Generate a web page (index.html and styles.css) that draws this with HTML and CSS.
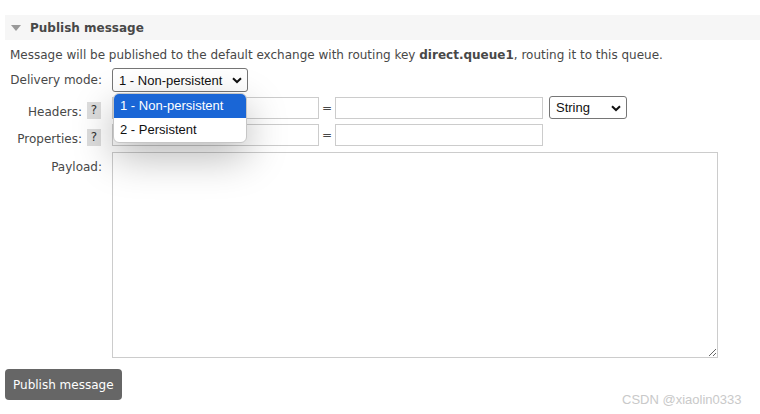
FILE: index.html
```html
<!DOCTYPE html>
<html>
<head>
<meta charset="utf-8">
<link rel="stylesheet" href="styles.css">
</head>
<body>
<div class="section">
  <h2 class="section-head"><span class="tri"></span>Publish message</h2>
  <div class="section-body">
    <p class="intro">Message will be published to the default exchange with routing key <b>direct.queue1</b>, routing it to this queue.</p>
    <div class="form">
      <label class="lbl">Delivery mode:</label>
      <div class="ctl">
        <div class="dm-wrap">
          <div class="sel sel-dm"><span>1 - Non-persistent</span><svg class="chev" width="10" height="7" viewBox="0 0 10 7"><path d="M1 1.2 L5 5 L9 1.2" fill="none" stroke="#111" stroke-width="2"/></svg></div>
          <div class="dropdown">
            <div class="opt active">1 - Non-persistent</div>
            <div class="opt">2 - Persistent</div>
          </div>
        </div>
      </div>

      <label class="lbl lbl-help">Headers: <span class="help">?</span></label>
      <div class="ctl kv">
        <input class="inp key" type="text">
        <span class="eq">=</span>
        <input class="inp val" type="text">
        <div class="sel sel-type"><span>String</span><svg class="chev" width="10" height="7" viewBox="0 0 10 7"><path d="M1 1.2 L5 5 L9 1.2" fill="none" stroke="#111" stroke-width="2"/></svg></div>
      </div>

      <label class="lbl lbl-help">Properties: <span class="help">?</span></label>
      <div class="ctl kv">
        <input class="inp key" type="text">
        <span class="eq">=</span>
        <input class="inp val" type="text">
      </div>

      <label class="lbl lbl-top">Payload:</label>
      <div class="ctl">
        <textarea class="payload"></textarea>
      </div>
    </div>
    <button class="btn">Publish message</button>
  </div>
</div>
<div class="watermark">CSDN @xiaolin0333</div>
</body>
</html>
```

FILE: styles.css
```css
* { box-sizing: border-box; }
html, body { margin: 0; padding: 0; background: #fff; }
body {
  font-family: "DejaVu Sans", Verdana, sans-serif;
  font-size: 12px;
  color: #484848;
  padding: 15px 0 0 5px;
  width: 760px;
  height: 414px;
  overflow: hidden;
  position: relative;
}
.section-head {
  margin: 0;
  height: 25px;
  background: #f6f6f6;
  font-size: 12px;
  font-weight: bold;
  color: #484848;
  display: flex;
  align-items: center;
  padding-left: 6px;
}
.tri {
  width: 0; height: 0;
  border-left: 5px solid transparent;
  border-right: 5px solid transparent;
  border-top: 6px solid #999;
  margin-right: 9px;
  margin-top: 1px;
}
.section-body { padding: 7px 0 0 5px; }
.intro { margin: 0; line-height: 16px; color: #484848; }
.intro b { color: #484848; }
.form {
  display: grid;
  grid-template-columns: 92px 606px;
  column-gap: 10px;
  row-gap: 4px;
  margin-top: 5px;
}
.lbl {
  display: flex;
  justify-content: flex-end;
  align-items: center;
  gap: 5px;
  color: #484848;
  white-space: nowrap;
}
.lbl-help { align-items: flex-end; }
.lbl-top { align-items: flex-start; padding-top: 10px; }
.help {
  display: inline-block;
  width: 14px;
  height: 17px;
  line-height: 17px;
  text-align: center;
  background: #ddd;
  color: #333;
  margin-right: 1px;
}
.ctl { display: flex; align-items: center; }
.dm-wrap { position: relative; }
.sel {
  display: flex;
  align-items: center;
  justify-content: space-between;
  border: 1px solid #767676;
  border-radius: 3px;
  background: #fff;
  font-family: "Liberation Sans", Arial, sans-serif;
  font-size: 13px;
  color: #111;
  padding: 0 5px 0 6px;
}
.sel-dm { width: 136px; height: 24px; }
.sel-type { width: 78px; height: 23px; margin-left: 6px; }
.chev { margin-top: 1px; }
.dropdown {
  position: absolute;
  left: 1px;
  top: 25px;
  width: 134px;
  background: #fff;
  border: 1px solid #c6c6c6;
  border-radius: 6px;
  overflow: hidden;
  box-shadow: 0 14px 40px rgba(0,0,0,0.28);
  z-index: 5;
  font-family: "Liberation Sans", Arial, sans-serif;
  font-size: 13px;
  color: #111;
}
.opt { height: 24px; line-height: 23px; padding-left: 6px; }
.opt.active { background: #1a66d6; color: #fff; }
.kv { height: 23px; }
.inp {
  border: 1px solid #ccc;
  height: 22px;
  padding: 0;
  margin: 0;
  background: #fff;
  outline: none;
}
.key { width: 207px; }
.val { width: 208px; }
.eq { width: 16px; text-align: center; color: #484848; }
.payload {
  display: block;
  width: 606px;
  height: 206px;
  border: 1px solid #ccc;
  margin: 2px 0 0;
  padding: 0;
  resize: both;
  outline: none;
}
.btn {
  margin: 11px 0 0 -5px;
  height: 31px;
  padding: 0 8px;
  border: none;
  border-radius: 4px;
  background: #666;
  color: #fff;
  font-family: "DejaVu Sans", Verdana, sans-serif;
  font-size: 12px;
}
.watermark {
  position: absolute;
  left: 622px;
  top: 392px;
  font-family: "Liberation Sans", Arial, sans-serif;
  font-size: 13px;
  color: #c9c9c9;
}
```
